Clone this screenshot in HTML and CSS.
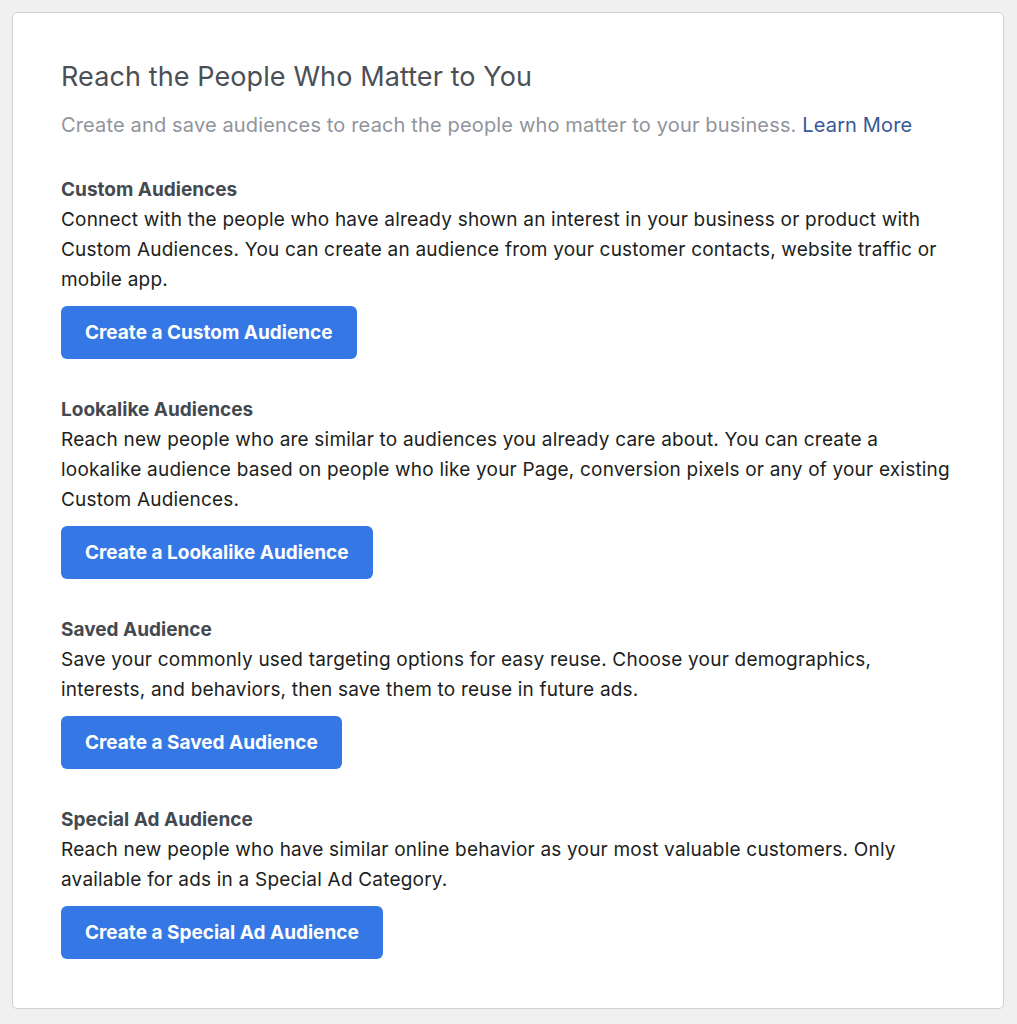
FILE: index.html
```html
<!DOCTYPE html>
<html lang="en">
<head>
    <meta charset="UTF-8">
    <title>Audiences</title>
    <link rel="stylesheet" href="styles.css">
</head>
<body>
    <div class="card">
        <h1 class="title">Reach the People Who Matter to You</h1>
        <p class="subtitle">Create and save audiences to reach the people who matter to your business. <a href="#" class="learn">Learn More</a></p>

        <div class="section">
            <h2 class="section-title">Custom Audiences</h2>
            <p class="section-text">Connect with the people who have already shown an interest in your business or product with Custom Audiences. You can create an audience from your customer contacts, website traffic or mobile app.</p>
            <button class="button">Create a Custom Audience</button>
        </div>

        <div class="section">
            <h2 class="section-title">Lookalike Audiences</h2>
            <p class="section-text">Reach new people who are similar to audiences you already care about. You can create a lookalike audience based on people who like your Page, conversion pixels or any of your existing Custom Audiences.</p>
            <button class="button">Create a Lookalike Audience</button>
        </div>

        <div class="section">
            <h2 class="section-title">Saved Audience</h2>
            <p class="section-text">Save your commonly used targeting options for easy reuse. Choose your demographics, interests, and behaviors, then save them to reuse in future ads.</p>
            <button class="button">Create a Saved Audience</button>
        </div>

        <div class="section">
            <h2 class="section-title">Special Ad Audience</h2>
            <p class="section-text">Reach new people who have similar online behavior as your most valuable customers. Only available for ads in a Special Ad Category.</p>
            <button class="button">Create a Special Ad Audience</button>
        </div>
    </div>
</body>
</html>
```

FILE: styles.css
```css
body {
    margin: 0;
    padding: 12px 13px 12px 12px;
    background-color: #f0f0f0;
    font-family: Inter, Roboto, "Liberation Sans", sans-serif;
}

.card {
    background-color: #ffffff;
    border: 1px solid #cfd0d2;
    border-radius: 5px;
    padding: 48px 47px 49px 48px;
}

.title {
    margin: 0;
    font-size: 27px;
    line-height: 32px;
    font-weight: 400;
    letter-spacing: 0.1px;
    color: #4b4f56;
}

.subtitle {
    margin: 17px 0 0 0;
    font-size: 20px;
    line-height: 30px;
    letter-spacing: 0.15px;
    color: #90949c;
}

.learn {
    color: #385898;
    text-decoration: none;
}

.section {
    margin-top: 35px;
}

.section + .section {
    margin-top: 36px;
}

.section-title {
    margin: 0;
    font-size: 19px;
    line-height: 30px;
    font-weight: 700;
    color: #444950;
}

.section-text {
    margin: 0;
    font-size: 19px;
    line-height: 30px;
    letter-spacing: 0.2px;
    color: #1c1e21;
}

.button {
    margin-top: 11px;
    height: 53px;
    padding: 0 24px;
    background-color: #3578e5;
    color: #ffffff;
    border: none;
    border-radius: 6px;
    font-family: Inter, Roboto, "Liberation Sans", sans-serif;
    font-size: 19px;
    font-weight: 700;
    cursor: pointer;
}
```
